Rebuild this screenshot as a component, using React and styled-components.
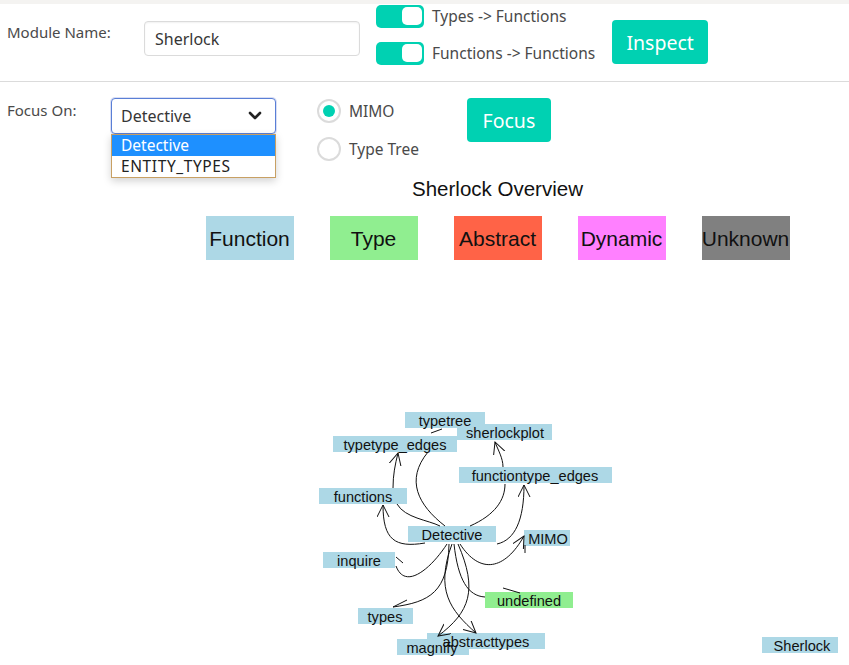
import React from 'react';
import styled, { createGlobalStyle } from 'styled-components';

const GlobalStyle = createGlobalStyle`
  html, body {
    margin: 0;
    padding: 0;
    background: #fff;
    overflow: hidden;
  }
  body {
    font-family: "Noto Sans", "Open Sans", sans-serif;
    color: #4a4a4a;
  }
`;

const teal = '#00d1b2';

const Page = styled.div`
  width: 849px;
  height: 665px;
  display: flex;
  flex-direction: column;
`;

const TopStrip = styled.div`
  height: 4px;
  background: #f4f3f1;
  flex-shrink: 0;
`;

const Row = styled.div`
  display: flex;
  align-items: flex-start;
  padding-left: 7px;
  height: ${(p) => p.$h}px;
  flex-shrink: 0;
  position: relative;
`;

const Divider = styled.hr`
  margin: 0;
  border: none;
  border-top: 1px solid #dbdbdb;
  height: 0;
`;

const Label = styled.div`
  width: ${(p) => p.$w}px;
  margin-top: ${(p) => p.$top}px;
  font-size: 15px;
  line-height: 24px;
  color: #4a4a4a;
`;

const TextInput = styled.input`
  box-sizing: border-box;
  width: 216px;
  height: 35px;
  margin-top: 17px;
  border: 1px solid #dbdbdb;
  border-radius: 4px;
  padding: 0 10px;
  font-family: inherit;
  font-size: 16px;
  color: #363636;
  box-shadow: inset 0 1px 2px rgba(10, 10, 10, 0.06);
  outline: none;
`;

const Switches = styled.div`
  display: flex;
  flex-direction: column;
  gap: 13px;
  margin-left: 16px;
  margin-top: 0;
`;

const SwitchRow = styled.label`
  display: flex;
  align-items: center;
  gap: 8px;
  font-size: 15.5px;
  line-height: 24px;
  color: #4a4a4a;
`;

const Switch = styled.span`
  box-sizing: border-box;
  width: 48px;
  height: 23px;
  border-radius: 5px;
  background: ${teal};
  display: flex;
  justify-content: flex-end;
  align-items: center;
  padding: 2px;
`;

const Knob = styled.span`
  width: 20px;
  height: 18px;
  background: #fff;
  border-radius: 5px;
`;

const Button = styled.button`
  box-sizing: border-box;
  width: ${(p) => p.$w}px;
  height: 44px;
  margin-top: ${(p) => p.$top}px;
  margin-left: ${(p) => p.$left}px;
  background: ${teal};
  color: #fff;
  border: none;
  border-radius: 4px;
  font-family: inherit;
  font-size: 19.5px;
  cursor: pointer;
`;

const SelectWrap = styled.div`
  position: relative;
  margin-top: 16px;
`;

const SelectBox = styled.div`
  box-sizing: border-box;
  width: 165px;
  height: 36px;
  border: 1px solid #5a7fd6;
  border-radius: 4px;
  box-shadow: 0 0 0 1px rgba(72, 95, 199, 0.2);
  display: flex;
  align-items: center;
  justify-content: space-between;
  padding: 0 13px 0 9px;
  font-size: 16px;
  color: #363636;
  background: #fff;
`;

const Options = styled.div`
  position: absolute;
  top: 36px;
  left: 0;
  width: 165px;
  box-sizing: border-box;
  border: 1px solid #c8a063;
  background: #fff;
  box-shadow: 0 3px 8px rgba(0, 0, 0, 0.18);
  z-index: 2;
`;

const Option = styled.div`
  height: 21px;
  line-height: 21px;
  padding-left: 9px;
  font-size: 15.5px;
  letter-spacing: ${(p) => (p.$active ? '0' : '0.6px')};
  color: ${(p) => (p.$active ? '#fff' : '#222')};
  background: ${(p) => (p.$active ? '#1e90ff' : '#fff')};
`;

const Radios = styled.div`
  display: flex;
  flex-direction: column;
  gap: 14px;
  margin-left: 41px;
  margin-top: 17px;
`;

const RadioRow = styled.label`
  display: flex;
  align-items: center;
  gap: 8px;
  font-size: 15.5px;
  color: #4a4a4a;
`;

const RadioCircle = styled.span`
  box-sizing: border-box;
  width: 24px;
  height: 24px;
  border-radius: 50%;
  border: 2px solid #dbdbdb;
  display: flex;
  align-items: center;
  justify-content: center;
  &::after {
    content: '';
    width: 12px;
    height: 12px;
    border-radius: 50%;
    background: ${(p) => (p.$on ? teal : 'transparent')};
  }
`;

const Plot = styled.div`
  display: flex;
  flex-direction: column;
  align-items: center;
  padding-left: 146px;
  font-family: "Liberation Sans", Arial, sans-serif;
  color: #111;
`;

const PlotTitle = styled.div`
  font-size: 20.5px;
  line-height: 22px;
`;

const Legend = styled.div`
  display: flex;
  gap: 36px;
  margin-top: 16px;
`;

const LegendBox = styled.div`
  box-sizing: border-box;
  width: 88px;
  height: 44px;
  padding-top: 2px;
  background: ${(p) => p.$c};
  display: flex;
  align-items: center;
  justify-content: center;
  font-size: 21px;
  color: #111;
`;

const Graph = styled.svg`
  display: block;
  flex-shrink: 0;
  font-family: "Liberation Sans", Arial, sans-serif;
`;

const legend = [
  ['Function', '#add8e6'],
  ['Type', '#90ee90'],
  ['Abstract', '#ff6347'],
  ['Dynamic', '#ff80ff'],
  ['Unknown', '#808080'],
];

const nodes = [
  { t: 'typetree', x: 405, y: 412, w: 80, cx: 445 },
  { t: 'sherlockplot', x: 457, y: 424, w: 95, cx: 505 },
  { t: 'typetype_edges', x: 333, y: 436, w: 124, cx: 395 },
  { t: 'functiontype_edges', x: 459, y: 467, w: 153, cx: 535 },
  { t: 'functions', x: 319, y: 488, w: 88, cx: 363 },
  { t: 'Detective', x: 408, y: 526, w: 88, cx: 452 },
  { t: 'MIMO', x: 524, y: 530, w: 46, cx: 548 },
  { t: 'inquire', x: 323, y: 552, w: 72, cx: 359 },
  { t: 'undefined', x: 485, y: 592, w: 88, cx: 529, c: '#90ee90' },
  { t: 'types', x: 358, y: 608, w: 55, cx: 385 },
  { t: 'magnify', x: 397, y: 639, w: 72, cx: 432 },
  { t: 'abstracttypes', x: 427, y: 633, w: 118, cx: 486 },
  { t: 'Sherlock', x: 762, y: 637, w: 76, cx: 802 },
];

const arrows = [
  'M 425 543 C 395 548, 383 540, 383 505',
  'M 393 488 C 393 475, 395 465, 398 453',
  'M 503 467 C 503 458, 498 450, 495 442',
  'M 497 544 C 515 540, 524 520, 524 485',
  'M 460 544 C 480 575, 505 570, 524 536',
  'M 452 544 C 435 590, 450 610, 476 633',
  'M 458 544 C 478 590, 470 612, 438 636',
];

const lines = [
  'M 397 504 C 405 518, 428 520, 440 526',
  'M 428 452 C 405 480, 418 505, 445 526',
  'M 470 526 C 495 515, 505 500, 505 484',
  'M 447 544 C 430 570, 405 590, 396 566',
  'M 396 557 L 403 563',
  'M 454 544 C 458 580, 468 596, 485 597',
  'M 503 588 L 520 593',
  'M 449 544 C 448 592, 430 602, 393 607',
  'M 393 607 L 407 600',
  'M 431 433 L 442 429',
  'M 525 545 L 525 553',
];

export default function App() {
  return (
    <>
      <GlobalStyle />
      <Page>
        <TopStrip />
        <Row $h={77}>
          <Label $w={137} $top={16}>Module Name:</Label>
          <TextInput defaultValue="Sherlock" />
          <Switches>
            <SwitchRow>
              <Switch><Knob /></Switch>
              Types -&gt; Functions
            </SwitchRow>
            <SwitchRow>
              <Switch><Knob /></Switch>
              Functions -&gt; Functions
            </SwitchRow>
          </Switches>
          <Button $w={96} $top={16} $left={17}>Inspect</Button>
        </Row>
        <Divider />
        <Row $h={96}>
          <Label $w={104} $top={16}>Focus On:</Label>
          <SelectWrap>
            <SelectBox>
              Detective
              <svg width="14" height="10" viewBox="0 0 14 10">
                <polyline points="2,2 7,7 12,2" fill="none" stroke="#222" strokeWidth="2.6" strokeLinecap="round" strokeLinejoin="round" />
              </svg>
            </SelectBox>
            <Options>
              <Option $active>Detective</Option>
              <Option>ENTITY_TYPES</Option>
            </Options>
          </SelectWrap>
          <Radios>
            <RadioRow><RadioCircle $on />MIMO</RadioRow>
            <RadioRow><RadioCircle />Type Tree</RadioRow>
          </Radios>
          <Button $w={84} $top={16} $left={48}>Focus</Button>
        </Row>
        <Plot>
          <PlotTitle>Sherlock Overview</PlotTitle>
          <Legend>
            {legend.map(([t, c]) => (
              <LegendBox key={t} $c={c}>{t}</LegendBox>
            ))}
          </Legend>
        </Plot>
        <Graph width="849" height="405" viewBox="0 260 849 405">
          <defs>
            <marker id="arr" markerUnits="userSpaceOnUse" markerWidth="14" markerHeight="14" refX="12" refY="6" orient="auto">
              <path d="M0,0 L12,6 L0,12" fill="none" stroke="#111" strokeWidth="1" />
            </marker>
          </defs>
          {nodes.map((n) => (
            <rect key={n.t} x={n.x} y={n.y} width={n.w} height={16} fill={n.c || '#add8e6'} />
          ))}
          <g fill="none" stroke="#111" strokeWidth="1">
            {lines.map((d, i) => <path key={i} d={d} />)}
            {arrows.map((d, i) => <path key={i} d={d} markerEnd="url(#arr)" />)}
          </g>
          {nodes.map((n) => (
            <text key={n.t} x={n.cx} y={n.y + 14} fontSize="14.6" textAnchor="middle" fill="#111">{n.t}</text>
          ))}
        </Graph>
      </Page>
    </>
  );
}
